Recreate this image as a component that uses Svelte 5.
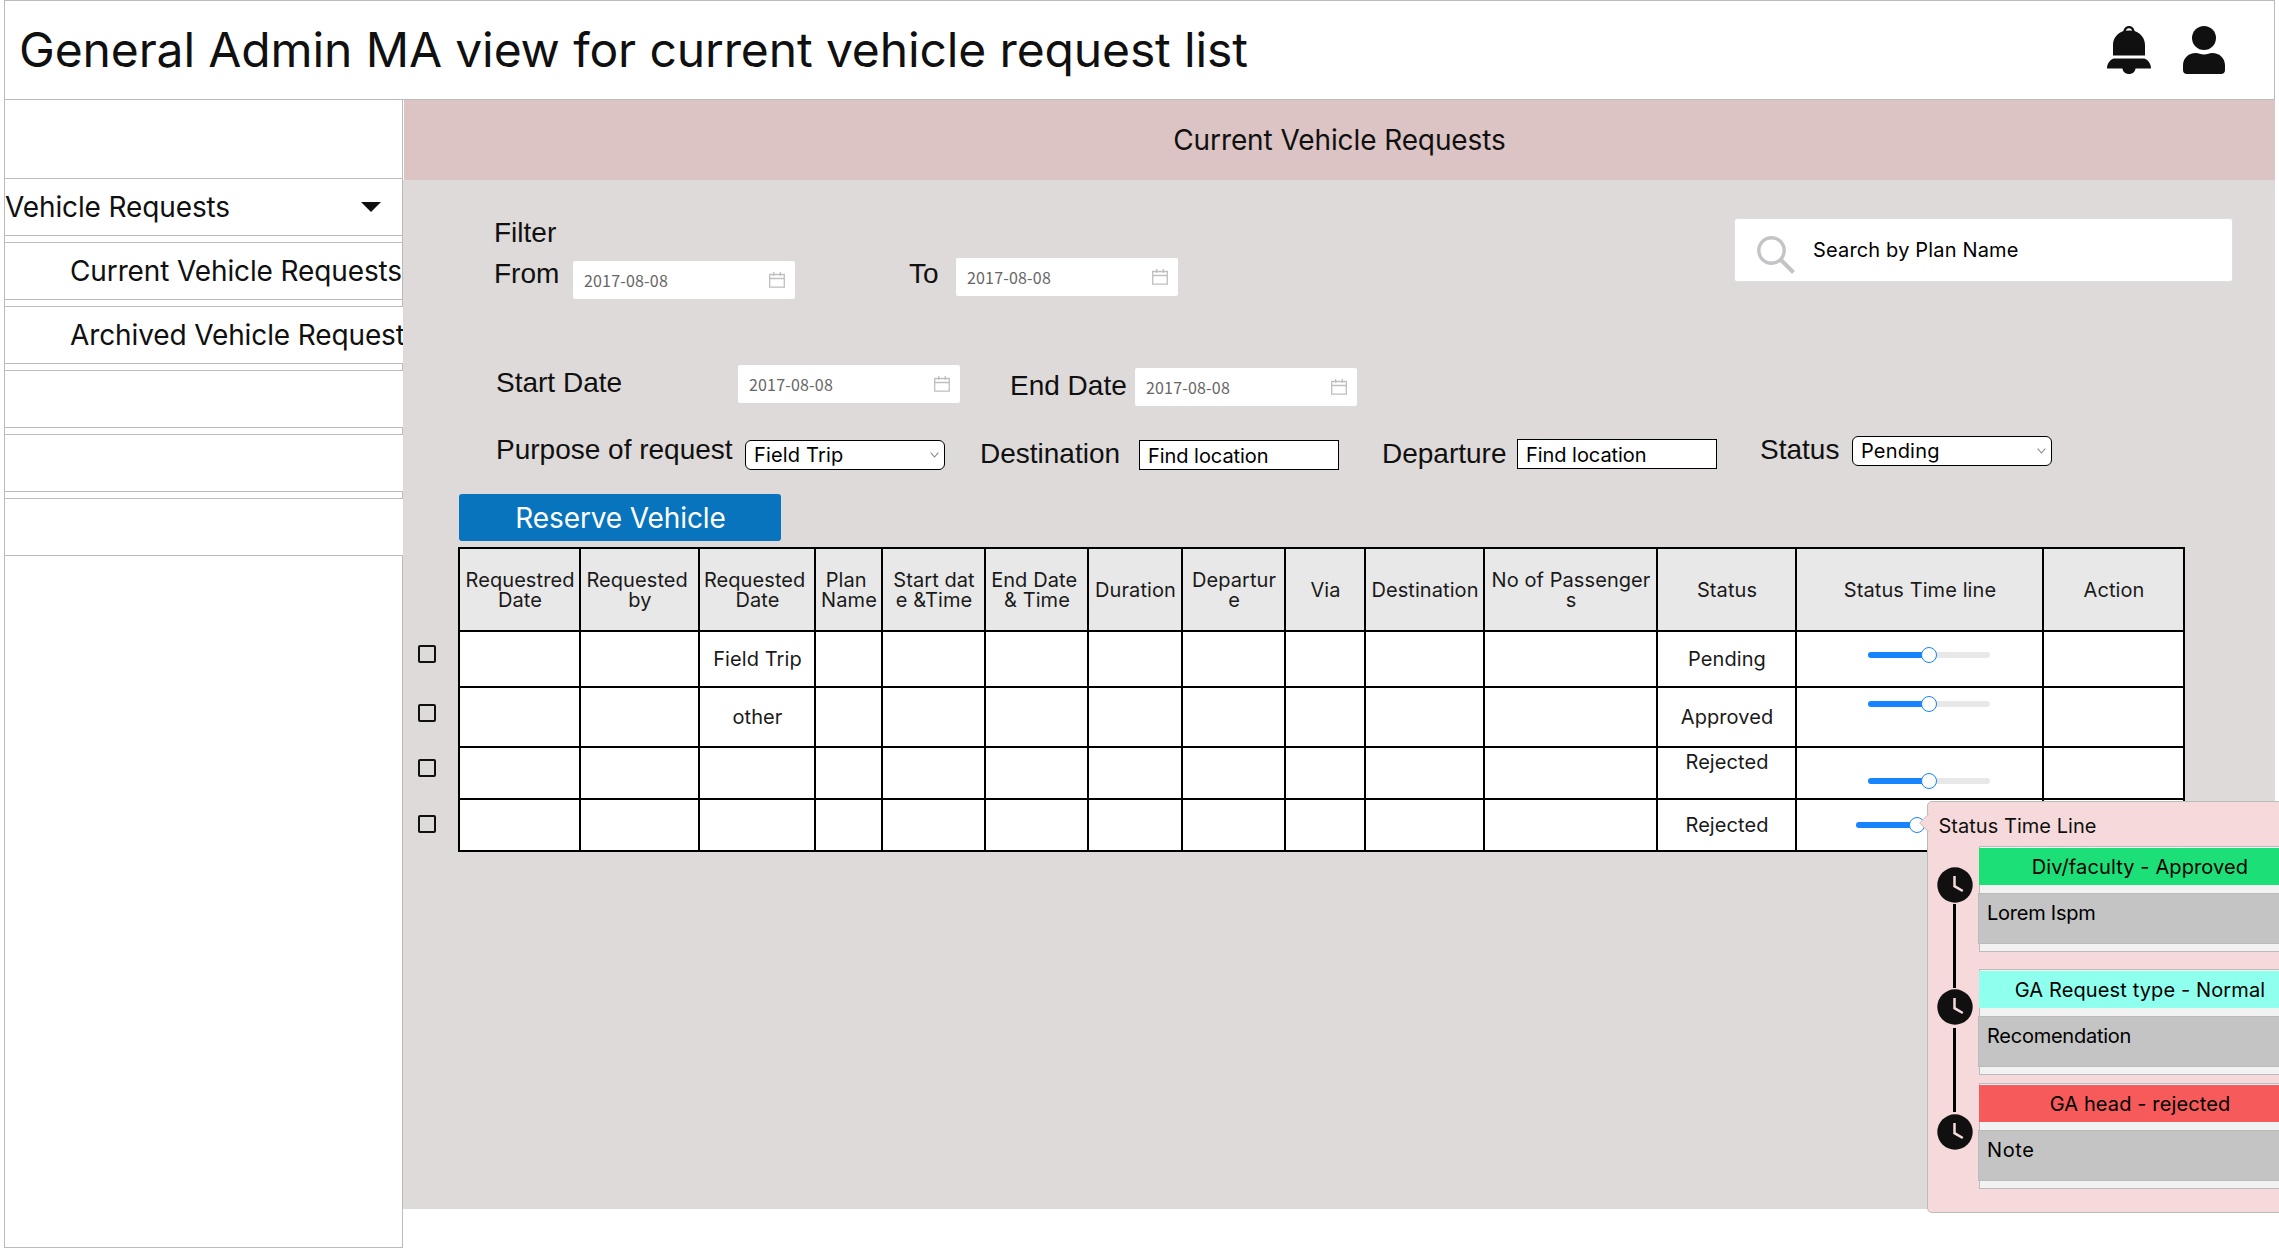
<script>
  const menu = [
    { label: 'Current Vehicle Requests' },
    { label: 'Archived Vehicle Requests' },
    { label: '' },
    { label: '' },
    { label: '' }
  ];

  const columns = [
    ['Requestred', 'Date'],
    ['Requested\u00a0', 'by'],
    ['Requested\u00a0', 'Date'],
    ['Plan\u00a0', 'Name'],
    ['Start dat', 'e &Time'],
    ['End Date\u00a0', '& Time'],
    ['Duration'],
    ['Departur', 'e'],
    ['Via'],
    ['Destination'],
    ['No of Passenger', 's'],
    ['Status'],
    ['Status Time line'],
    ['Action']
  ];

  const rows = [
    { purpose: 'Field Trip', status: 'Pending', slider: 's1' },
    { purpose: 'other', status: 'Approved', slider: 's2' },
    { purpose: '', status: 'Rejected', slider: 's3', raised: true },
    { purpose: '', status: 'Rejected', slider: 's4' }
  ];

  const steps = [
    { title: 'Div/faculty - Approved', body: 'Lorem Ispm', tone: 'green' },
    { title: 'GA Request type - Normal', body: 'Recomendation', tone: 'aqua' },
    { title: 'GA head - rejected', body: 'Note', tone: 'red' }
  ];
</script>

{#snippet dateField(cls)}
  <div class="date {cls}">
    <span>2017-08-08</span>
    <svg width="16" height="16" viewBox="0 0 16 16" fill="none" stroke="#bfbfbf">
      <path d="M.7 2.5h14.6v12.6H.7zM.7 6.5h14.6M4.7 0v4M11.3 0v4" stroke-width="1.3" />
    </svg>
  </div>
{/snippet}

{#snippet selectField(value, cls)}
  <div class="box select {cls}">
    <span>{value}</span>
    <svg width="9" height="6" viewBox="0 0 9 6" fill="none" stroke="#888" stroke-width="1.1"><path d="M.7.7 4.5 5 8.3.7" /></svg>
  </div>
{/snippet}

<div class="page">
  <header>
    <h1>General Admin MA view for current vehicle request list</h1>
    <div class="icons">
      <svg width="44" height="48" viewBox="0 0 44 48" fill="#101010">
        <path fill-rule="evenodd" d="M22 0c3 0 5.200 2.200 5.600 5C34 7.200 38 12.500 38 19v10.500H6V19C6 12.500 10 7.200 16.400 5 16.800 2.200 19 0 22 0Zm0 2.200c-1.700 0-2.800 1.200-3.100 2.500 2-.4 4.200-.4 6.200 0-.3-1.300-1.400-2.500-3.100-2.500Z" />
        <path d="M6.500 32.500h31c4 1.500 6.500 5.500 6.500 10H28.500c-.3 3.300-3 5.500-6.500 5.500s-6.200-2.200-6.500-5.500H0c0-4.500 2.500-8.500 6.500-10Z" />
      </svg>
      <svg width="42" height="48" viewBox="0 0 42 48" fill="#101010">
        <ellipse cx="21" cy="12" rx="12" ry="12" />
        <path d="M13 27c2.500 0 4.500 1.500 8 1.500s5.500-1.500 8-1.500c8 0 13 5.500 13 12.500V44c0 2.500-1.500 4-4 4H4c-2.500 0-4-1.500-4-4v-4.500C0 32.500 5 27 13 27Z" />
      </svg>
    </div>
  </header>

  <div class="body">
    <nav>
      <div class="item parent">
        <span>Vehicle Requests</span>
        <svg width="20" height="10" viewBox="0 0 20 10"><path d="M0 0h20L10 10z" fill="#101010" /></svg>
      </div>
      {#each menu as m, i}
        <div class="item" class:wide={i > 0}><span>{m.label}</span></div>
      {/each}
    </nav>

    <main>
      <div class="banner">Current Vehicle Requests</div>
      <section class="content">
        <div class="top">
          <div class="filters">
            <div class="label">Filter</div>
            <div class="row dates1">
              <span class="label">From</span>
              {@render dateField('d4')}
              <span class="label">To</span>
              {@render dateField('d1')}
            </div>
            <div class="row dates2">
              <span class="label d1">Start Date</span>
              {@render dateField('')}
              <span class="label d4">End Date</span>
              {@render dateField('d3')}
            </div>
          </div>
          <div class="search">
            <svg width="38" height="38" viewBox="0 0 38 38" fill="none" stroke="#c3c4c7">
              <circle cx="14.500" cy="14.500" r="12.700" stroke-width="3.400" />
              <path d="M23.500 23.500 36.500 36.500" stroke-width="4" />
            </svg>
            <span>Search by Plan Name</span>
          </div>
        </div>
        <div class="row selects">
          <span class="label">Purpose of request</span>
          {@render selectField('Field Trip', 'd7')}
          <span class="label d4">Destination</span>
          <div class="box d7">Find location</div>
          <span class="label d4">Departure</span>
          <div class="box d6">Find location</div>
          <span class="label">Status</span>
          {@render selectField('Pending', 'd3')}
        </div>

        <button>Reserve Vehicle</button>

        <div class="list">
          <div class="checks">
            {#each rows as _}<i></i>{/each}
          </div>
          <div class="table">
            {#each columns as lines}
              <div class="cell head">
                {#each lines as line}<span>{line}</span>{/each}
              </div>
            {/each}
            {#each rows as r}
              {#each columns as _, c}
                <div class="cell" class:raised={c === 11 && r.raised} class:track={c === 12}>
                  {#if c === 2}{r.purpose}{:else if c === 11}{r.status}{:else if c === 12}
                    <div class="slider {r.slider}"><b></b><i></i></div>
                  {/if}
                </div>
              {/each}
            {/each}
          </div>
        </div>
      </section>
    </main>
  </div>

  <aside class="popup">
    <svg class="arrow" width="10" height="20" viewBox="0 0 10 20"><path d="M10 .5.700 10 10 19.500" fill="#f6dadb" stroke="#bbb" /></svg>
    <div class="poptitle">Status Time Line</div>
    <div class="popbody">
      <div class="rail">
        {#each steps as _, i}
          <svg width="36" height="36" viewBox="0 0 36 36">
            <circle cx="18" cy="18" r="17.700" fill="#101010" />
            <path d="M17.500 9v10.200l8.300 4.800" fill="none" stroke="#f6dadb" stroke-width="2.500" />
          </svg>
          {#if i < 2}<div class="link"></div>{/if}
        {/each}
      </div>
      <div class="cards">
        {#each steps as s}
          <div class="card">
            <div class="tag {s.tone}">{s.title}</div>
            <div class="note">{s.body}</div>
          </div>
        {/each}
      </div>
    </div>
  </aside>
</div>

<style>
  * { box-sizing: border-box; }
  .page {
    position: relative;
    width: 2279px;
    height: 1248px;
    padding-left: 4px;
    overflow: hidden;
    background: #fff;
    color: #101010;
    font-family: Inter, sans-serif;
    font-size: 20px;
    letter-spacing: 0.03px;
  }
  header {
    width: 2271px;
    height: 100px;
    border: 1px solid #bbb;
    display: flex;
    align-items: center;
    justify-content: space-between;
    padding: 0 49px 0 14px;
  }
  h1 {
    margin: 0;
    font-size: 48px;
    font-weight: 400;
    line-height: 60px;
    letter-spacing: -0.12px;
    white-space: nowrap;
  }
  .icons { display: flex; gap: 32px; }
  .icons svg { display: block; }
  .body { display: flex; height: 1148px; }
  nav {
    width: 399px;
    height: 1148px;
    border: 1px solid #bbb;
    border-top: 0;
    padding-top: 78px;
    display: flex;
    flex-direction: column;
    gap: 6px;
    flex: none;
  }
  .item {
    height: 58px;
    flex: none;
    background: #fff;
    border: 1px solid #bbb;
    border-width: 1px 0;
    font-size: 28px;
    line-height: 56px;
    padding-left: 65px;
    white-space: nowrap;
    overflow: hidden;
    letter-spacing: -0.12px;
  }
  .item.wide { margin-right: -1px; }
  .parent {
    display: flex;
    align-items: center;
    justify-content: space-between;
    padding: 0 21px 0 0;
  }
  main { width: 1872px; flex: none; }
  .banner {
    height: 80px;
    margin-left: 1px;
    background: #dcc4c4;
    text-align: center;
    font-size: 28px;
    line-height: 80px;
    letter-spacing: -0.1px;
  }
  .content {
    height: 1029px;
    background: #dedad9;
    padding: 36px 0 0 15px;
  }
  .top { display: flex; justify-content: space-between; height: 217px; }
  .filters { padding-left: 76px; }
  .label {
    font-family: "Liberation Sans", Arial, sans-serif;
    font-size: 28px;
    line-height: 32px;
    letter-spacing: 0;
    white-space: nowrap;
    padding-top: 1px;
  }
  .row { display: grid; align-items: start; }
  .dates1 { grid-template-columns: 79px 336px 47px 222px; margin-top: 8px; height: 108px; }
  .dates2 { grid-template-columns: 242px 272px 125px 222px; padding-left: 2px; }
  .selects { grid-template-columns: 249px 235px 159px 243px 135px 243px 92px 200px; padding-left: 78px; height: 61px; }
  .d1 { margin-top: 1px; }
  .d3 { margin-top: 3px; }
  .d4 { margin-top: 4px; }
  .d6 { margin-top: 6px; }
  .d7 { margin-top: 7px; }
  .date {
    width: 222px;
    height: 38px;
    border-radius: 2px;
    background: #fff;
    padding: 0 10px 0 11px;
    display: flex;
    align-items: center;
    justify-content: space-between;
    font: 16px/24px "Noto Sans CJK SC", sans-serif;
    letter-spacing: 0.18px;
    color: #666;
  }
  .box {
    width: 200px;
    height: 30px;
    border: 1px solid #000;
    background: #fff;
    color: #000;
    padding: 0 5px 0 8px;
    line-height: 30px;
    letter-spacing: -0.05px;
  }
  .select {
    border-radius: 6px;
    display: flex;
    align-items: center;
    justify-content: space-between;
    letter-spacing: 0.18px;
  }
  .search {
    width: 499px;
    height: 64px;
    margin: 2px 42px 0 0;
    border: 1px solid #dcdfe6;
    border-radius: 3px;
    background: #fff;
    color: #000;
    display: flex;
    padding: 17px 0 0 22px;
    gap: 18px;
    line-height: 28px;
    letter-spacing: 0.16px;
  }
  button {
    display: block;
    width: 322px;
    height: 47px;
    margin: 0 0 6px 41px;
    padding: 0 0 0 1px;
    border: 0;
    border-radius: 3px;
    background: #0874bd;
    color: #fff;
    font: 28px/48px Inter, sans-serif;
    letter-spacing: -0.12px;
  }
  .list { display: flex; align-items: flex-start; gap: 22px; }
  .checks { width: 18px; padding-top: 98px; }
  .checks i {
    display: block;
    width: 18px;
    height: 18px;
    border: 2px solid #101010;
    border-radius: 2px;
    margin-bottom: 37px;
  }
  .checks i:nth-child(1) { margin-bottom: 41px; }
  .checks i:nth-child(3) { margin-bottom: 38px; }
  .table {
    display: grid;
    grid-template-columns: 119px 117px 114px 65px 101px 101px 92px 101px 78px 117px 171px 137px 245px 139px;
    grid-template-rows: 81px 54px 58px 50px 50px;
    gap: 2px;
    padding: 2px;
    background: #000;
  }
  .cell {
    background: #fff;
    display: flex;
    flex-direction: column;
    align-items: center;
    justify-content: center;
    line-height: 20px;
    white-space: nowrap;
    letter-spacing: 0.08px;
    padding-left: 1px;
    color: #1a1a1a;
  }
  .head { background: #e8e8e8; }
  .raised { justify-content: flex-start; padding-top: 4px; }
  .track { align-items: flex-start; justify-content: flex-start; padding-left: 71px; }
  .track.head { align-items: center; }
  .slider {
    display: flex;
    align-items: center;
    width: 122px;
    height: 6px;
    border-radius: 3px;
    background: #e8e8e8;
  }
  .slider b { width: 61px; height: 6px; border-radius: 3px; background: #1684fc; }
  .slider i {
    width: 16px;
    height: 16px;
    margin-left: -8px;
    border: 1px solid #1684fc;
    border-radius: 50%;
    background: #fff;
    flex: none;
  }
  .s1 { margin-top: 20px; }
  .s2 { margin-top: 13px; }
  .s3 { margin-top: 30px; }
  .s4 { margin: 22px 0 0 -12px; }

  /* Timeline panel floats over the list and runs past the right edge. */
  .popup {
    position: absolute;
    left: 1927px;
    top: 801px;
    width: 390px;
    height: 412px;
    border: 1px solid #bbb;
    border-radius: 5px;
    background: #f6dadb;
  }
  .arrow { position: absolute; left: -9px; top: 11px; }
  .poptitle { padding: 11px 0 0 10.5px; line-height: 26px; }
  .popbody { display: flex; padding: 7px 0 0 9px; gap: 6px; }
  .rail { width: 36px; padding-top: 21px; display: flex; flex-direction: column; align-items: center; }
  .rail svg { display: block; flex: none; }
  .link { width: 3px; height: 84px; margin: 1px 2px 1px 0; background: #000; }
  .rail svg:nth-of-type(2) + .link { margin-top: 3px; margin-bottom: 2px; }
  .card {
    width: 322px;
    height: 106px;
    border: 1px solid #bbb;
    background: #f2f2f2;
    margin-bottom: 17px;
    padding-top: 1px;
    color: #000;
  }
  .card:nth-child(2) { margin-bottom: 8px; }
  .tag {
    height: 37px;
    margin: 0 -1px;
    text-align: center;
    line-height: 38px;
    letter-spacing: 0.12px;
  }
  .green { background: #1ddf78; }
  .aqua { background: #8fffee; }
  .red { background: #f65a5a; }
  .note {
    height: 51px;
    margin: 8px -2px 0;
    border: 1px solid #bbb;
    background: #c4c4c4;
    padding: 6px 8px;
    line-height: 26px;
    letter-spacing: -0.25px;
  }
  .card:nth-child(3) .note { letter-spacing: 0.6px; }
</style>
